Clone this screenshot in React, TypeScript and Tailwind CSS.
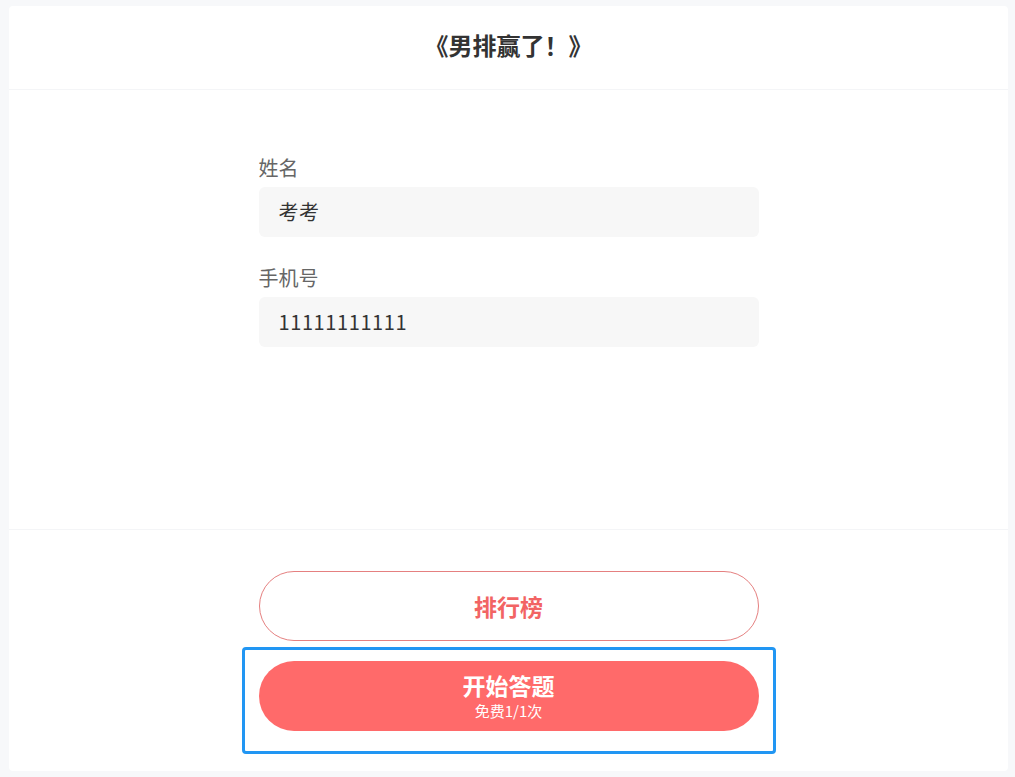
import React from "react";

const font = { fontFamily: '"Noto Sans CJK SC", "Noto Sans", sans-serif' };

function Field({ label, value }: { label: string; value: string }) {
  return (
    <div className="flex flex-col">
      <span className="text-[20px] leading-[26px] text-[#666666]">{label}</span>
      <div className="mt-[6px] flex h-[50px] items-center rounded-[6px] bg-[#f7f7f7] px-[20px] text-[20px] tracking-[0.6px] text-[#333333]">
        {value}
      </div>
    </div>
  );
}

export default function App() {
  return (
    <div className="min-h-[777px] bg-[#f7f8fa] pl-[9px] pr-[7px] pt-[6px] pb-[6px]" style={font}>
      <div className="flex flex-col rounded-[4px] bg-white">
        {/* header */}
        <div className="flex h-[84px] items-center justify-center border-b border-[#f4f5f7] pb-[6px]">
          <h1 className="text-[24px] font-bold text-[#333333]">《男排赢了！》</h1>
        </div>

        {/* form */}
        <div className="flex h-[440px] justify-center border-b border-[#f4f5f7] pt-[65px]">
          <div className="flex w-[500px] flex-col gap-[28px]">
            <Field label="姓名" value="考考" />
            <Field label="手机号" value="11111111111" />
          </div>
        </div>

        {/* actions */}
        <div className="flex h-[241px] flex-col items-center pt-[41px]">
          <button className="flex h-[70px] w-[500px] items-center justify-center rounded-full border border-[#e58080] text-[23px] font-bold text-[#f26464]">
            排行榜
          </button>
          <div className="relative mt-[20px]">
            <div className="pointer-events-none absolute -bottom-[23px] -left-[17px] -right-[17px] -top-[14px] rounded-[4px] border-[3px] border-[#2196f3]" />
            <button className="flex h-[70px] w-[500px] flex-col items-center justify-start rounded-full bg-[#ff6a6a] pt-[10px] text-white">
              <span className="text-[23px] font-bold leading-[28px]">开始答题</span>
              <span className="mt-[3px] text-[15px] leading-[18px]">免费1/1次</span>
            </button>
          </div>
        </div>
      </div>
    </div>
  );
}
